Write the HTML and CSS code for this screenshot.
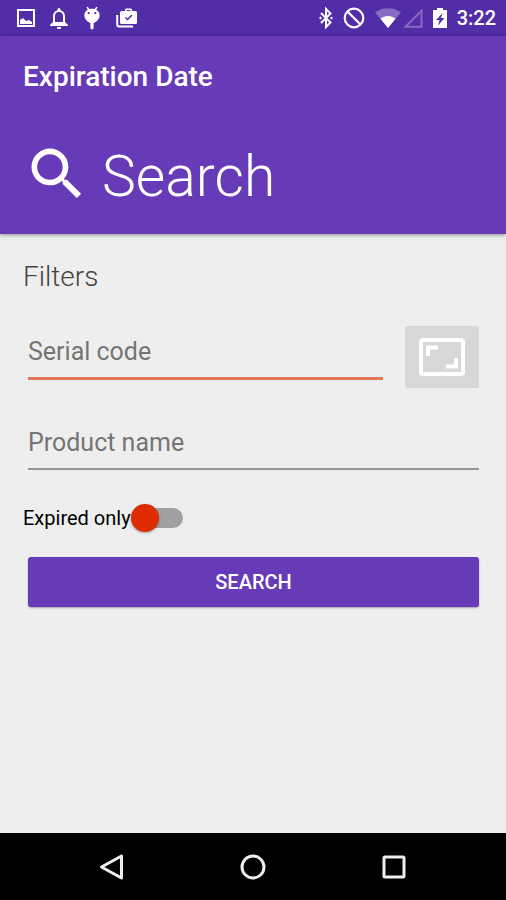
FILE: index.html
```html
<!DOCTYPE html>
<html lang="en">
<head>
<meta charset="utf-8">
<meta name="viewport" content="width=device-width, initial-scale=1">
<title>Expiration Date</title>
<link rel="stylesheet" href="styles.css">
</head>
<body>
<div class="status-bar">
  <div class="status-notifications">
    <svg width="18" height="18" viewBox="0 0 18 18"><rect x="1" y="1" width="16" height="16" fill="none" stroke="currentColor" stroke-width="2"/><path d="M3 15v-4l3-2 3 3 3-1 3 2v2z" fill="currentColor"/></svg>
    <svg width="18" height="22" viewBox="0 0 18 22"><path d="M4 16V9a5 5 0 0 1 10 0v7" fill="none" stroke="currentColor" stroke-width="2"/><path d="M0 18l3-3h12l3 3v1H0zM7 20h4v.5a2 2 0 0 1-4 0zM7.500 4V2.500a1.500 1.500 0 0 1 3 0V4z" fill="currentColor"/></svg>
    <svg width="18" height="24" viewBox="0 0 16 22"><path d="M3.500 1l2 3M12.500 1l-2 3" stroke="currentColor" stroke-width="1.500"/><path fill-rule="evenodd" d="M8 2.500c4 0 7 2.500 7 6S12 15 9.500 15.500V20a1.500 1.500 0 0 1-3 0v-4.500C4 15 1 12 1 8.500s3-6 7-6zM5 5.500a1 1 0 1 0 0 2 1 1 0 0 0 0-2zm6 0a1 1 0 1 0 0 2 1 1 0 0 0 0-2z" fill="currentColor"/></svg>
    <svg width="22" height="20" viewBox="0 0 22 20"><path d="M1.200 7v9.500a2 2 0 0 0 2 2H17" fill="none" stroke="currentColor" stroke-width="2"/><path fill-rule="evenodd" d="M9 3V1.500L10 .5h5l1 1V3h3.500A1.500 1.500 0 0 1 21 4.500v10a1.500 1.500 0 0 1-1.500 1.500h-14A1.500 1.500 0 0 1 4 14.500v-10A1.500 1.500 0 0 1 5.500 3zm1.500 0h4V2h-4z" fill="currentColor"/><path d="M9.500 9.500l2 2L16 7" fill="none" stroke="#512da8" stroke-width="1.500"/></svg>
  </div>
  <div class="status-system">
    <svg width="14" height="22" viewBox="0 0 14 22"><path d="M2 6l9.500 9.500L7 20V2l4.500 4.500L2 16" fill="none" stroke="currentColor" stroke-width="2"/><path d="M0 11l1.500-1.500L3 11l-1.500 1.500zM11 11l1.500-1.500L14 11l-1.500 1.500z" fill="currentColor"/></svg>
    <svg width="22" height="22" viewBox="0 0 22 22"><circle cx="11" cy="11" r="9.300" fill="none" stroke="currentColor" stroke-width="2.200"/><path d="M4.500 4.500l13 13" stroke="currentColor" stroke-width="2.200"/></svg>
    <svg class="wifi" width="26" height="20" viewBox="0 0 26 20"><path d="M13 20L0 4.500C7-1.200 19-1.200 26 4.500z" fill="currentColor" opacity=".3"/><path d="M13 20L5.500 10.800c4-3.600 11-3.600 15 0z" fill="currentColor"/></svg>
    <svg width="20" height="20" viewBox="0 0 20 20"><path d="M2.500 18.800L18.500 3v15.800z" fill="none" stroke="currentColor" stroke-width="2" opacity=".3"/></svg>
    <svg class="battery" width="14" height="20" viewBox="0 0 14 20"><path fill-rule="evenodd" d="M4 0h6v2h4v18H0V2h4zM9.500 5L3 12h3.500L5 17.500 11.500 10H8z" fill="currentColor"/></svg>
    <span class="clock">3:22</span>
  </div>
</div>
<header class="app-header">
  <div class="app-title">Expiration Date</div>
  <div class="page-heading">
    <svg width="68" height="68" viewBox="0 0 24 24"><path fill="currentColor" d="M15.500 14h-.79l-.28-.27A6.471 6.471 0 0 0 16 9.500 6.500 6.500 0 1 0 9.500 16c1.610 0 3.090-.59 4.230-1.570l.27.28v.79l5 4.990L20.490 19l-4.990-5zm-6 0C7.010 14 5 11.990 5 9.500S7.010 5 9.500 5 14 7.010 14 9.500 11.990 14 9.500 14z"/></svg>
    <h1>Search</h1>
  </div>
</header>
<main>
  <h2>Filters</h2>
  <form>
    <div class="serial-row">
      <input class="field field-active" type="text" aria-label="Serial code" placeholder="Serial code">
      <button class="scan" type="button" aria-label="Scan code">
        <svg width="50" height="40" viewBox="0 0 50 40"><rect x="4" y="3" width="42" height="34" rx="2" fill="none" stroke="currentColor" stroke-width="4"/><path d="M11 19v-8.500h10M39 21v8.500H29" fill="none" stroke="currentColor" stroke-width="4"/></svg>
      </button>
    </div>
    <input class="field" type="text" aria-label="Product name" placeholder="Product name">
    <label class="switch-row">
      <span>Expired only</span>
      <input class="switch" type="checkbox" role="switch">
    </label>
    <button class="submit" type="button">SEARCH</button>
  </form>
</main>
<nav class="nav-bar">
  <button type="button" aria-label="Back"><svg width="28" height="28" viewBox="0 0 28 28"><path d="M3.500 14L23.500 3v22z" fill="none" stroke="currentColor" stroke-width="3" stroke-linejoin="round"/></svg></button>
  <button type="button" aria-label="Home"><svg width="28" height="28" viewBox="0 0 28 28"><circle cx="14" cy="14" r="11" fill="none" stroke="currentColor" stroke-width="3"/></svg></button>
  <button type="button" aria-label="Recent apps"><svg width="28" height="28" viewBox="0 0 28 28"><rect x="4" y="4" width="20" height="20" rx="1" fill="none" stroke="currentColor" stroke-width="3"/></svg></button>
</nav>
</body>
</html>
```
FILE: styles.css
```css
* {
  box-sizing: border-box;
}

body {
  margin: 0;
  min-height: 100vh;
  display: flex;
  flex-direction: column;
  background: #eeeeee;
  color: #000;
  font-family: Roboto, sans-serif;
}

svg {
  display: block;
  flex: none;
}

button {
  border: 0;
  padding: 0;
  font-family: inherit;
}

.status-bar {
  display: flex;
  justify-content: space-between;
  align-items: center;
  height: 36px;
  padding: 0 10px 0 17px;
  background: #512da8;
  color: #fff;
}

.status-notifications {
  display: flex;
  align-items: center;
  gap: 15px;
}

.status-system {
  display: flex;
  align-items: center;
  gap: 10px;
}

.wifi {
  margin-right: -8px;
}

.clock {
  font-size: 20px;
  font-weight: 500;
  line-height: 24px;
}

.app-header {
  padding: 24px 24px 26px 23px;
  background: #673ab7;
  color: #fff;
  box-shadow: 0 1px 4px rgba(0, 0, 0, 0.4);
}

.app-title {
  font-size: 28px;
  font-weight: 500;
  line-height: 34px;
}

.page-heading {
  display: flex;
  align-items: flex-end;
  gap: 11px;
  margin-top: 46px;
}

h1 {
  margin: 0;
  font-size: 57px;
  font-weight: 300;
  line-height: 62px;
}

main {
  flex: 1;
  padding: 24px 27px 24px 23px;
}

h2 {
  margin: 0;
  color: #444;
  font-size: 28px;
  font-weight: 300;
  line-height: 38px;
}

form {
  display: flex;
  flex-direction: column;
}

.serial-row {
  display: flex;
  gap: 22px;
  margin: 30px 0 28px 5px;
}

.field {
  min-width: 0;
  height: 54px;
  margin-left: 5px;
  padding: 0;
  border: 0;
  border-bottom: 2px solid #979797;
  border-radius: 0;
  outline: 0;
  background: none;
  color: #222;
  font-family: inherit;
  font-size: 25px;
}

.field-active {
  flex: 1;
  margin-left: 0;
  border-bottom: 3px solid #df7858;
}

.field::placeholder {
  color: #757575;
  opacity: 1;
}

.scan {
  display: flex;
  align-items: center;
  justify-content: center;
  width: 74px;
  height: 62px;
  border-radius: 3px;
  background: #d6d8d7;
  color: #fff;
}

.switch-row {
  display: flex;
  align-items: center;
  align-self: flex-start;
  height: 32px;
  margin-top: 32px;
  font-size: 20px;
}

.switch {
  appearance: none;
  display: flex;
  align-items: center;
  width: 52px;
  height: 20px;
  margin: 0;
  border-radius: 10px;
  background: #a0a0a0;
}

.switch::before {
  content: "";
  flex: none;
  width: 28px;
  height: 28px;
  border-radius: 50%;
  background: #dd2c00;
  box-shadow: 0 1px 3px rgba(0, 0, 0, 0.3);
}

.switch:checked {
  justify-content: flex-end;
}

.submit {
  height: 50px;
  margin: 23px 0 0 5px;
  border-radius: 3px;
  background: #673ab7;
  box-shadow: 0 1px 2px rgba(0, 0, 0, 0.3);
  color: #fff;
  font-size: 20px;
  font-weight: 500;
}

.nav-bar {
  display: flex;
  justify-content: center;
  gap: 113px;
  height: 67px;
  background: #000;
  color: #eee;
}

.nav-bar button {
  display: flex;
  align-items: center;
  background: none;
  color: inherit;
}
```
